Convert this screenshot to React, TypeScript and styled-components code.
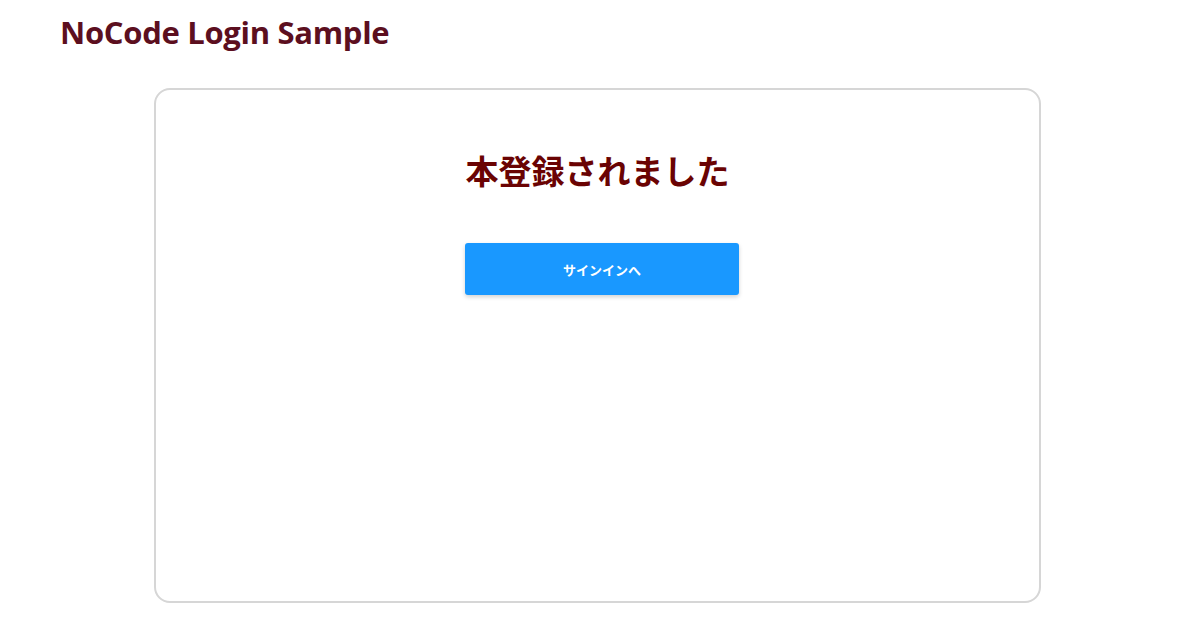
import { FC } from 'react'
import styled, { createGlobalStyle } from 'styled-components'

const GlobalStyle = createGlobalStyle`
    body {
        margin: 0;
        background: #fff;
        font-family: 'Open Sans', 'Noto Sans CJK JP', sans-serif;
    }
`

const Page = styled.div`
    display: flex;
    flex-direction: column;
    padding: 0 60px;
`

const Header = styled.h1`
    margin: 0;
    padding-top: 11px;
    height: 88px;
    box-sizing: border-box;
    font-family: 'Open Sans', sans-serif;
    font-size: 31px;
    line-height: 42px;
    font-weight: 700;
    letter-spacing: -0.3px;
    color: #5c0f1f;
`

const Card = styled.div`
    box-sizing: border-box;
    margin-left: 94px;
    width: 887px;
    height: 515px;
    border: 2px solid #d6d6d6;
    border-radius: 16px;
    display: flex;
    flex-direction: column;
    align-items: center;
    padding-top: 56px;
`

const Title = styled.h2`
    margin: 0;
    font-family: 'Noto Sans CJK JP', sans-serif;
    font-size: 33px;
    font-weight: 700;
    line-height: 48px;
    color: #6a0303;
`

const Button = styled.button`
    margin: 49px 0 0 9px;
    width: 274px;
    height: 52px;
    border: none;
    border-radius: 3px;
    background: #1998ff;
    color: #fff;
    font-family: 'Noto Sans CJK JP', sans-serif;
    font-size: 13px;
    font-weight: 700;
    box-shadow: 0 2px 4px rgba(0, 0, 0, 0.18);
    cursor: pointer;
`

const App: FC = () => {
    return (
        <>
            <GlobalStyle />
            <Page>
                <Header>NoCode Login Sample</Header>
                <Card>
                    <Title>本登録されました</Title>
                    <Button>サインインへ</Button>
                </Card>
            </Page>
        </>
    )
}

export default App
